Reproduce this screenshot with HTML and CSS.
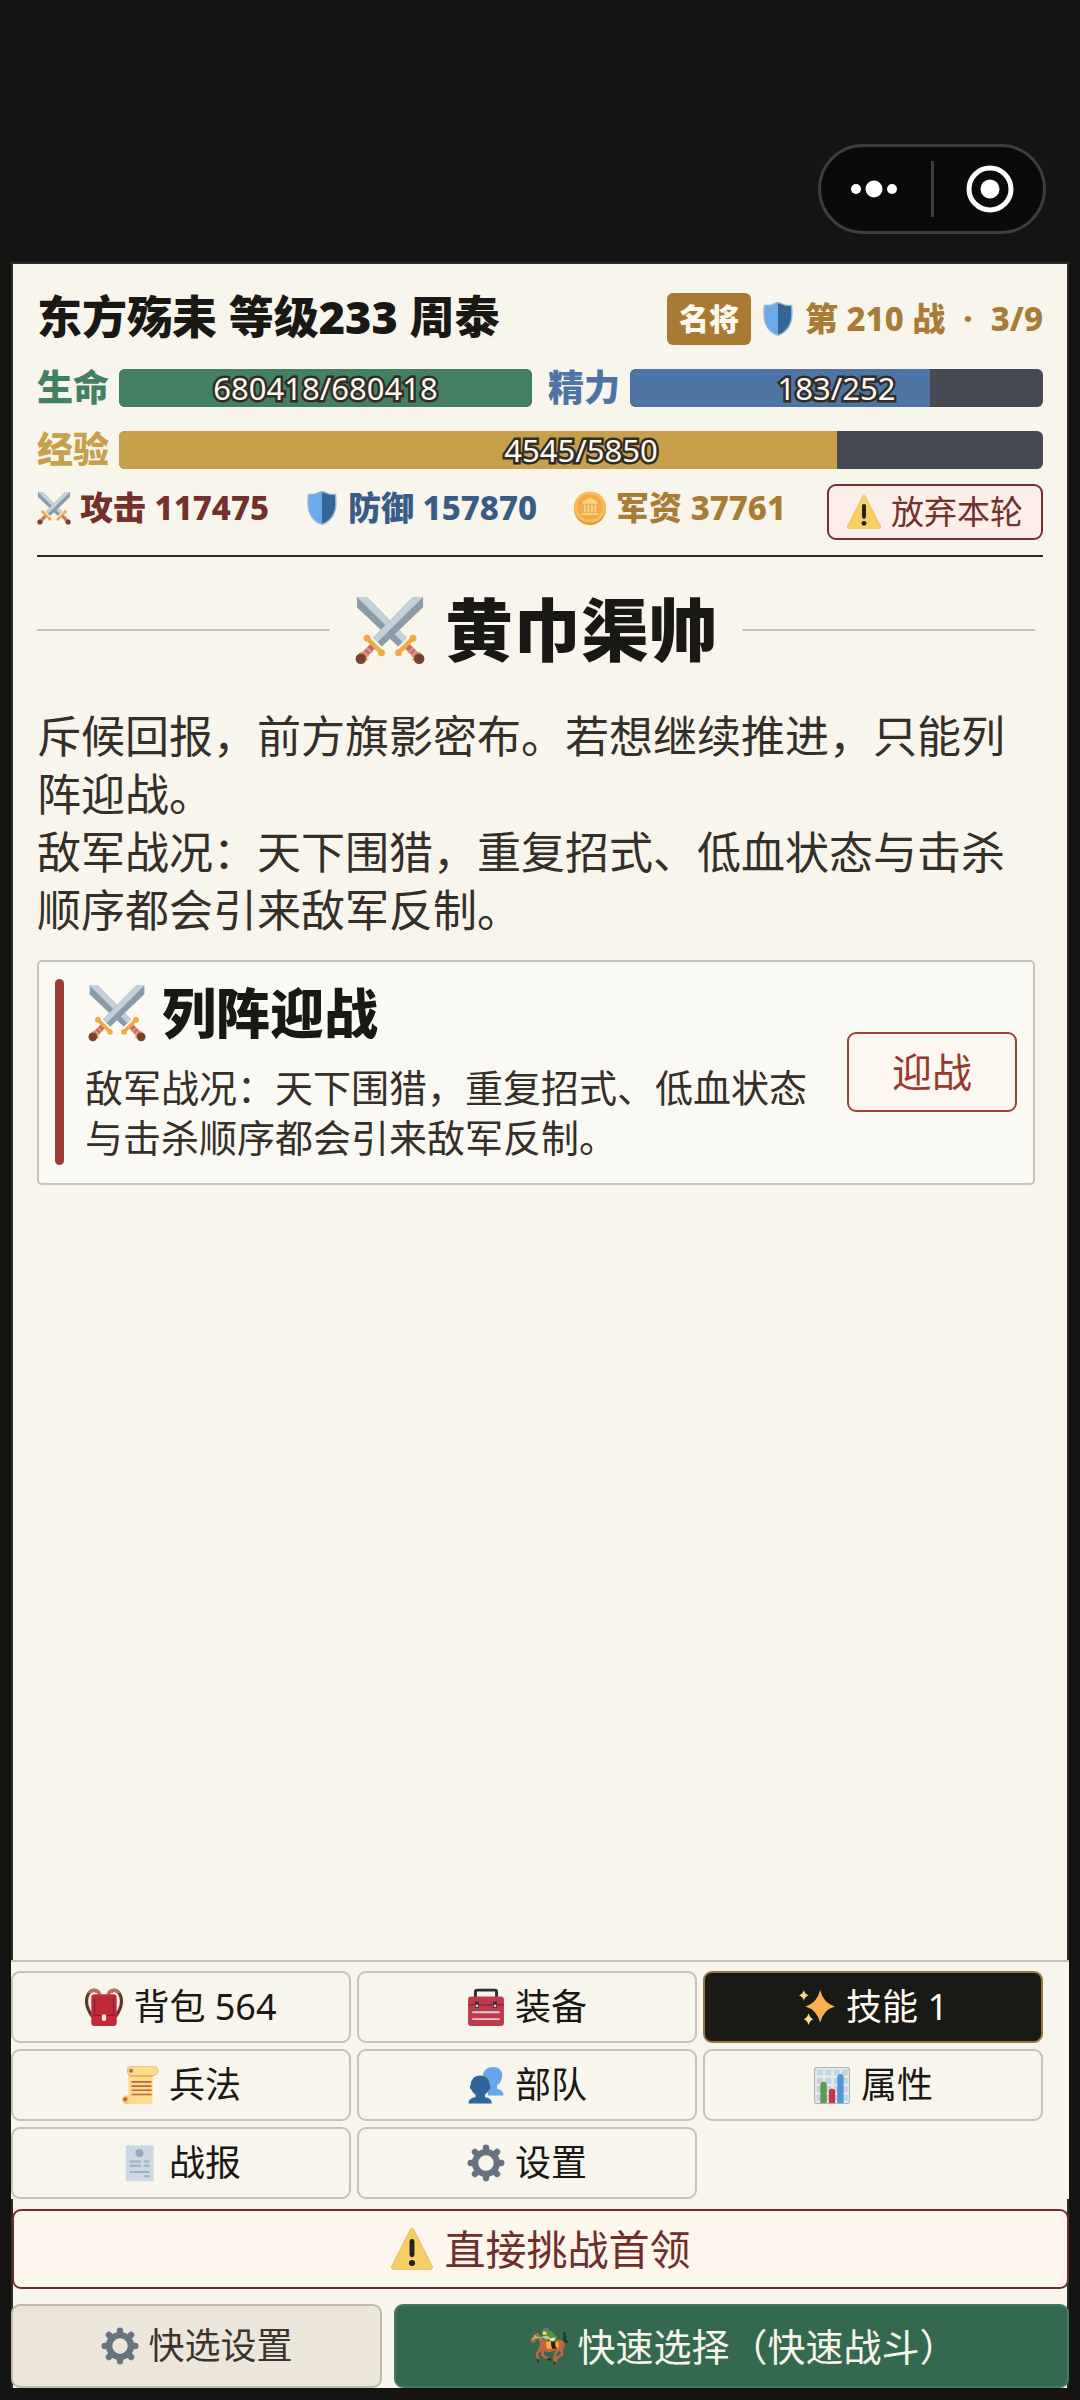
FILE: index.html
```html
<!DOCTYPE html>
<html lang="zh-CN">
<head>
<meta charset="utf-8">
<meta name="viewport" content="width=device-width">
<title>黄巾渠帅</title>
<link rel="stylesheet" href="styles.css">
</head>
<body>
<svg class="sprite" aria-hidden="true">
  <symbol id="i-swords" viewBox="0 0 36 36">
    <path fill="#8b9ba8" d="M1 1h5.200l20.500 21-4.500 4.500L1 6.300z"/>
    <path fill="#c5d1d9" d="M1 1h5.200l20.500 21-2.200 2.300z"/>
    <path fill="#8b9ba8" d="M29.800 1H35v5.300L13.800 26.500 9.300 22z"/>
    <path fill="#c5d1d9" d="M29.800 1H35L11.500 24.300 9.300 22z"/>
    <g stroke-linecap="round" fill="none">
      <path stroke="#c46d66" stroke-width="3.400" d="M8.500 27L4.500 31M27.500 27l4 4"/>
      <path stroke="#e09a88" stroke-width="1" d="M6.500 27.500l2 2M4.700 29.300l2 2M29.500 27.500l-2 2M31.300 29.300l-2 2"/>
      <path stroke="#f0ab42" stroke-width="2.300" d="M6.500 22.500l7 7M29.500 22.500l-7 7"/>
    </g>
    <g fill="#f0ab42"><circle cx="6.200" cy="22.200" r="1.800"/><circle cx="13.600" cy="29.700" r="1.800"/><circle cx="29.800" cy="22.200" r="1.800"/><circle cx="22.400" cy="29.700" r="1.800"/></g>
    <path stroke="#f0ab42" stroke-width="1.400" d="M2.500 29.500l4 4M33.500 29.500l-4 4"/>
    <circle cx="3" cy="32.800" r="2.700" fill="#78412f"/><circle cx="33" cy="32.800" r="2.700" fill="#78412f"/>
  </symbol>
  <symbol id="i-shield" viewBox="0 0 36 36">
    <path fill="#9bb5cb" d="M33 3s-6.500.200-9-1c-3-1.300-4-2-6-2s-3 .700-6 2C9.500 3.200 3 3 3 3s-.500 5-.500 10C2.500 24 8 33 18 36c10-3 15.500-12 15.500-23 0-5-.500-10-.500-10z"/>
    <path fill="#6aaae8" d="M18 1.500c-2 0-3 .700-5.500 1.800C10 4.500 4.300 4.500 4.300 4.500S4 9 4 13c0 10 5 18.500 14 21.400z"/>
    <path fill="#326699" d="M18 1.500c2 0 3 .700 5.500 1.800 2.500 1.200 8.200 1.200 8.200 1.200S32 9 32 13c0 10-5 18.500-14 21.400z"/>
  </symbol>
  <symbol id="i-coin" viewBox="0 0 36 36">
    <ellipse cx="18" cy="18.500" rx="17" ry="17.500" fill="#e79535"/>
    <ellipse cx="18" cy="17" rx="17" ry="16.500" fill="#f6be5e"/>
    <circle cx="18" cy="17" r="13.500" fill="#f2ab46"/>
    <path fill="#fbd48c" d="M18 7l8 4.500v2H10v-2zM11.500 14.500h2v8h-2zM15.300 14.500h2v8h-2zM19 14.500h2v8h-2zM22.700 14.500h2v8h-2zM9.500 23.500h17v2h-17z"/>
  </symbol>
  <symbol id="i-warn" viewBox="0 0 36 36">
    <path fill="#f5cf64" stroke="#d5ad4e" stroke-width=".5" d="M2.700 35.500C.700 35.500-.300 34 .700 32.500L16.200 1.800c1-2 2.600-2 3.600 0l15.500 30.700c1 1.500 0 3-2 3z"/>
    <path stroke="#231f20" stroke-width="4.200" stroke-linecap="round" d="M18 11.500v11.500"/>
    <circle cx="18" cy="30" r="2.600" fill="#231f20"/>
  </symbol>
  <symbol id="i-bag" viewBox="0 0 36 36">
    <path fill="none" stroke="#6a3326" stroke-width="3" d="M7 27C2 20 0 12 3 6c2-4 6-5 10-2M29 27c5-7 7-15 4-21-2-4-6-5-10-2"/>
    <path fill="none" stroke="#bd705c" stroke-width="3.500" d="M4 5c2-4 8-4 10 1M32 5c-2-4-8-4-10 1"/>
    <path fill="#bf2a3a" d="M9 6h18c2 0 3 1 3 3v24c0 2-1 3-3 3H9c-2 0-3-1-3-3V9c0-2 1-3 3-3z"/>
    <path fill="none" stroke="#8f1c2c" stroke-width="1" d="M9 10v16h18V10"/>
    <rect x="16" y="25" width="4" height="6" rx="1" fill="#f5e8de"/>
  </symbol>
  <symbol id="i-toolbox" viewBox="0 0 36 36">
    <path fill="none" stroke="#292f33" stroke-width="2.800" d="M8 9V3.500Q8 2 9.500 2h17Q28 2 28 3.500V9"/>
    <rect x="1" y="8" width="34" height="28" rx="3" fill="#be3b4b"/>
    <path stroke="#982b3b" stroke-width="1.500" d="M1 16h34"/>
    <path stroke="#e9c8cb" stroke-width="1.800" d="M5 23h26M5 29.500h26"/>
    <path stroke="#292f33" stroke-width="3.500" d="M9.500 13v6M26.500 13v6"/>
    <circle cx="9.500" cy="17" r="1.300" fill="#ccd6dd"/><circle cx="26.500" cy="17" r="1.300" fill="#ccd6dd"/>
  </symbol>
  <symbol id="i-spark" viewBox="0 0 36 36">
    <path fill="#f9b14f" d="M21 2q3 12.500 14 15.500-11 3-14 15.500-3-12.500-14-15.500Q18 14.500 21 2z"/>
    <path fill="#fbdc88" d="M5.500 2q1 4 4.500 5-3.500 1-4.500 5-1-4-4.500-5 3.500-1 4.500-5zM10 24q1.200 4.500 4.500 5.500-3.300 1-4.500 5.500-1.200-4.500-4.500-5.500 3.300-1 4.500-5.500z"/>
  </symbol>
  <symbol id="i-scroll" viewBox="0 0 36 36">
    <rect x="1" y="28" width="28" height="8" rx="4" fill="#f4c672"/>
    <path fill="#fcdb8d" d="M7 3h23v30q0 3-3 3H7z"/>
    <rect x="6" y="0" width="29" height="9" rx="4" fill="#fcdb8d" stroke="#e5ad5b" stroke-width=".8"/>
    <path stroke="#e5ad5b" stroke-width="1.500" d="M8 9.500h22"/>
    <path stroke="#bd6642" stroke-width="1.600" d="M10 15h19M10 19h19M10 23h19M10 27h19"/>
    <circle cx="9.500" cy="4.500" r="2" fill="#bd6642"/><circle cx="4" cy="31.500" r="2" fill="#bd6642"/>
  </symbol>
  <symbol id="i-people" viewBox="0 0 36 36">
    <path fill="#66a8e7" d="M24 1c-5 0-9 4-9 9 0 4 2 7 4.500 8.500L20 28h14.500c.500-3-1.500-5.500-6-6.500V18c2.500-1 4-3.500 4.300-6.500C34.500 9 33.500 1 24 1z"/>
    <path fill="#31659a" d="M12.500 9C7 9 3.500 13 3.500 18c-1.500 1.500-.500 4 .800 4.500.700 2 2 3.500 3.700 4.500v2.500c-4.500.500-6.500 2.500-6.500 6h22c0-3.500-2-5.500-6.500-6V27c1.700-1 3-2.500 3.700-4.500 1.500-.500 2-3 .800-4.500 0-5-3.500-9-9-9z"/>
  </symbol>
  <symbol id="i-chart" viewBox="0 0 36 36">
    <rect x="1.500" y="1.500" width="33" height="34" rx="2.500" fill="#e5eaec" stroke="#a7b4bc"/>
    <path stroke="#c4d4de" stroke-width="5.500" stroke-dasharray="6 2" d="M3.500 6H33M3.500 14H33M3.500 22H33M3.500 30H33"/>
    <path fill="#60994b" d="M7 35V18q0-3 3-3t3 3v17z"/><path fill="#c7354b" d="M15 35V24q0-2.500 3-2.500t3 2.500v11z"/><path fill="#4f97d8" d="M23 35V10q0-2.500 3-2.500t3 2.500v25z"/>
  </symbol>
  <symbol id="i-report" viewBox="0 0 36 36">
    <path fill="#cdd9e2" d="M4.500 1H31v34.500H4.500z"/>
    <path stroke="#f8f5ec" stroke-width="1.600" stroke-dasharray="2 2" d="M4.500.800H31M4.500 35.500H31"/>
    <circle cx="17.500" cy="8.500" r="3.800" fill="#96a9ba"/>
    <path stroke="#9fb0c0" stroke-width="1.900" d="M8 16.500h11M21.500 16.500H27M8 20.500h11M21.500 20.500H27M8 26.500h19M21.500 30.500H27"/>
  </symbol>
  <symbol id="i-gear" viewBox="0 0 36 36">
    <path stroke="#67747f" stroke-width="6" stroke-linecap="round" d="M18 3.500v4M18 28.500v4M3.500 18h4M28.500 18h4M7.500 7.500l3 3M25.500 25.500l3 3M7.500 28.500l3-3M25.500 10.500l3-3"/>
    <circle cx="18" cy="18" r="10.300" fill="none" stroke="#67747f" stroke-width="6"/>
  </symbol>
  <symbol id="i-horse" viewBox="0 0 36 36">
    <path fill="none" stroke="#292f33" stroke-width="2.400" stroke-linecap="round" d="M31 14c2-2 3-4 1.500-8M32.500 13l2.500 1"/>
    <g fill="none" stroke="#bd6642" stroke-linejoin="round" stroke-linecap="round">
      <path stroke-width="2.400" d="M11 20l-4.500 5 1 6M13 21l-1.500 5.500 5.500 3.500M29 20l1.500 6-5 3.500-2 5M27 21l-3 4-1 6"/>
      <path stroke-width="4.500" d="M12 18l-2 3M28 18l1 3"/>
    </g>
    <path fill="#bd6642" d="M.500 14l2.500-6 4-2.500 6 7q8 1 16-.500 4 1 4 5-.500 4-4 5.500-5-.500-9 1-6 1-10-2.500-1.500-3-.500-7L7 11l-3 4z"/>
    <path stroke="#292f33" stroke-width="2" stroke-linecap="round" d="M7.500 32.500l-.500-1.500M17 30.500l2 .500M23 35l.500-1"/>
    <path fill="#ffac33" d="M15 14h12v6.500H16z"/>
    <path fill="#231f20" d="M20 13h4v5l2 2.500h-5l-1-3z"/>
    <path fill="#5c913b" d="M14 4.500l6-1 5 5 1 4-5 2-4-4z"/>
    <path fill="#f4ecd8" d="M18 11l6-1-1 3h-4z"/>
    <path fill="#a6d388" d="M11 9l5-1 4 3-5 1z"/>
    <path fill="#ffdc5d" d="M12 4h3.500v3.500H12z"/>
    <path fill="#67747f" d="M11.500 4q1-3.500 4-3.500 3.500.500 3 4z"/>
    <path stroke="#aed06c" stroke-width="1.300" d="M1.500 12l4.500-2 6 .500M4.500 8l2 3"/>
  </symbol>
</svg>

<div class="screen">
  <header class="topbar">
    <div class="capsule">
      <button type="button" class="capsule-btn" aria-label="更多">
        <svg width="46" height="18" viewBox="0 0 46 18" fill="#fff"><circle cx="5" cy="9" r="5"/><circle cx="23" cy="9" r="8.500"/><circle cx="41" cy="9" r="5"/></svg>
      </button>
      <span class="capsule-line"></span>
      <button type="button" class="capsule-btn" aria-label="关闭">
        <svg width="48" height="48" viewBox="0 0 48 48"><circle cx="24" cy="24" r="21" fill="none" stroke="#fff" stroke-width="5"/><circle cx="24" cy="24" r="9.500" fill="#fff"/></svg>
      </button>
    </div>
  </header>

  <main class="panel">
    <section class="status">
      <div class="row title-row">
        <h1 class="player">东方殇耒 等级233 周泰</h1>
        <div class="stage"><span class="badge">名将</span><svg class="icon"><use href="#i-shield"/></svg><span>第 210 战<span class="dot">·</span>3/9</span></div>
      </div>
      <div class="row bars">
        <div class="meter hp"><span class="meter-label">生命</span><div class="track"><div class="fill" style="width:100%"></div><span class="value">680418/680418</span></div></div>
        <div class="meter mp"><span class="meter-label">精力</span><div class="track"><div class="fill" style="width:72.6%"></div><span class="value">183/252</span></div></div>
      </div>
      <div class="row bars">
        <div class="meter xp"><span class="meter-label">经验</span><div class="track"><div class="fill" style="width:77.7%"></div><span class="value">4545/5850</span></div></div>
      </div>
      <div class="row stats">
        <span class="stat atk"><svg class="icon"><use href="#i-swords"/></svg>攻击 117475</span>
        <span class="stat def"><svg class="icon"><use href="#i-shield"/></svg>防御 157870</span>
        <span class="stat gold"><svg class="icon"><use href="#i-coin"/></svg>军资 37761</span>
        <button type="button" class="give-up"><svg class="icon"><use href="#i-warn"/></svg>放弃本轮</button>
      </div>
    </section>

    <section class="content">
      <h2 class="scene"><svg class="icon"><use href="#i-swords"/></svg>黄巾渠帅</h2>
      <div class="story">
        <p>斥候回报，前方旗影密布。若想继续推进，只能列阵迎战。</p>
        <p>敌军战况：天下围猎，重复招式、低血状态与击杀顺序都会引来敌军反制。</p>
      </div>
      <article class="card">
        <span class="card-mark"></span>
        <div class="card-body">
          <h3 class="card-title"><svg class="icon"><use href="#i-swords"/></svg>列阵迎战</h3>
          <p class="card-text">敌军战况：天下围猎，重复招式、低血状态与击杀顺序都会引来敌军反制。</p>
        </div>
        <button type="button" class="fight">迎战</button>
      </article>
    </section>

    <nav class="menu">
      <button type="button" class="menu-btn"><svg class="icon"><use href="#i-bag"/></svg>背包 564</button>
      <button type="button" class="menu-btn"><svg class="icon"><use href="#i-toolbox"/></svg>装备</button>
      <button type="button" class="menu-btn active"><svg class="icon"><use href="#i-spark"/></svg>技能 1</button>
      <button type="button" class="menu-btn"><svg class="icon"><use href="#i-scroll"/></svg>兵法</button>
      <button type="button" class="menu-btn"><svg class="icon"><use href="#i-people"/></svg>部队</button>
      <button type="button" class="menu-btn"><svg class="icon"><use href="#i-chart"/></svg>属性</button>
      <button type="button" class="menu-btn"><svg class="icon"><use href="#i-report"/></svg>战报</button>
      <button type="button" class="menu-btn"><svg class="icon"><use href="#i-gear"/></svg>设置</button>
    </nav>
    <button type="button" class="boss"><svg class="icon"><use href="#i-warn"/></svg>直接挑战首领</button>
    <div class="quick">
      <button type="button" class="quick-set"><svg class="icon"><use href="#i-gear"/></svg>快选设置</button>
      <button type="button" class="quick-go"><svg class="icon"><use href="#i-horse"/></svg>快速选择（快速战斗）</button>
    </div>
  </main>
</div>
</body>
</html>
```
FILE: styles.css
```css
* { box-sizing: border-box; }

body {
  margin: 0;
  background: #141412;
  color: #191814;
  font-family: "Noto Sans", "Noto Sans CJK SC", sans-serif;
}

h1, h2, h3, p { margin: 0; }
button { font-family: inherit; cursor: pointer; padding: 0; }
.sprite { display: none; }

.icon {
  width: 34px;
  height: 34px;
  flex: none;
}

.screen {
  min-height: 100vh;
  display: flex;
  flex-direction: column;
  padding: 0 11px 12px;
}

/* top bar */
.topbar {
  display: flex;
  justify-content: flex-end;
  padding: 144px 23px 28px;
}

.capsule {
  display: flex;
  align-items: center;
  width: 228px;
  height: 90px;
  border: 3px solid #3e3e3d;
  border-radius: 45px;
  background: #0a0a08;
}

.capsule-btn {
  flex: 1;
  display: flex;
  align-items: center;
  justify-content: center;
  height: 84px;
  border: 0;
  background: none;
}

.capsule-btn:first-child { padding-right: 4px; }
.capsule-btn:last-child { padding-left: 4px; }
.capsule-line { width: 3px; height: 56px; background: #3e3e3d; }

/* panel */
.panel {
  flex: 1;
  display: flex;
  flex-direction: column;
  border: 2px solid #2c2b27;
  border-bottom: 0;
  background: #f8f5ec;
}

.status {
  margin: 0 24px;
  padding: 29px 0 15px;
  border-bottom: 2px solid #2c2b24;
}

.row { display: flex; align-items: center; }
.title-row { justify-content: space-between; height: 52px; }
.player { font-size: 45px; line-height: 52px; font-weight: 900; padding-bottom: 4px; }

.stage {
  display: flex;
  align-items: center;
  gap: 10px;
  color: #a87c34;
  font-size: 33px;
  line-height: 52px;
  font-weight: 800;
}

.dot { margin: 0 18px; }

.badge {
  padding: 0 12px;
  border-radius: 6px;
  background: #a87a33;
  color: #fffaf0;
  font-size: 30px;
}

.bars { gap: 16px; margin-top: 24px; }
.meter { flex: 1; display: flex; align-items: center; gap: 10px; }
.meter-label { font-size: 36px; line-height: 38px; font-weight: 800; }

.track {
  flex: 1;
  position: relative;
  height: 38px;
  border-radius: 6px;
  background: #474a54;
}

.fill { height: 100%; border-radius: 6px 0 0 6px; background: currentColor; }
.hp .fill { border-radius: 6px; }

.value {
  position: absolute;
  inset: 0;
  color: #fffaf2;
  font-size: 31px;
  line-height: 38px;
  text-align: center;
  -webkit-text-stroke: 5px #302d26;
  paint-order: stroke fill;
}

.hp { color: #447f62; }
.mp { color: #4d74a4; }
.xp { color: #c8a04b; }

.stats {
  gap: 36px;
  align-items: flex-start;
  margin-top: 15px;
  font-size: 33px;
  line-height: 48px;
  font-weight: 800;
  white-space: nowrap;
}

.stat { display: flex; align-items: center; gap: 9px; }
.atk { color: #74302a; }
.def { color: #385c88; }
.gold { color: #a87c34; }

.give-up {
  display: flex;
  align-items: center;
  justify-content: center;
  gap: 10px;
  width: 216px;
  height: 56px;
  margin-left: auto;
  border: 2px solid #74302a;
  border-radius: 9px;
  background: #fcefea;
  color: #74302a;
  font-size: 33px;
  line-height: 52px;
}

/* story */
.content { padding: 33px 32px 0 24px; }

.scene {
  display: flex;
  align-items: center;
  font-size: 68px;
  line-height: 80px;
  font-weight: 900;
}

.scene::before, .scene::after {
  content: "";
  flex: 1;
  height: 2px;
  background: #c6c3b9;
}

.scene::before { margin-right: 25px; }
.scene::after { margin-left: 25px; }
.scene .icon { width: 70px; height: 70px; margin-right: 20px; }

.story {
  margin-top: 37px;
  color: #342f29;
  font-size: 44px;
  line-height: 58px;
}

.card {
  display: flex;
  align-items: center;
  margin-top: 21px;
  padding: 17px 16px 18px;
  border: 2px solid #c6c4b8;
  border-radius: 5px;
  background: #fbf9f3;
}

.card-mark {
  align-self: stretch;
  width: 9px;
  margin-right: 21px;
  border-radius: 5px;
  background: #9c3d32;
}

.card-body { flex: 1; padding-bottom: 3px; }

.card-title {
  display: flex;
  align-items: center;
  gap: 16px;
  padding-left: 3px;
  font-size: 54px;
  line-height: 68px;
  font-weight: 900;
}

.card-title .icon { width: 58px; height: 58px; }

.card-text {
  margin-top: 15px;
  color: #342f29;
  font-size: 38px;
  line-height: 50px;
}

.fight {
  flex: none;
  width: 170px;
  height: 80px;
  margin-left: 24px;
  border: 2px solid #9c4437;
  border-radius: 9px;
  background: #fcf8f1;
  color: #963a2e;
  font-size: 40px;
  line-height: 74px;
}

/* bottom menu */
.menu {
  display: grid;
  grid-template-columns: repeat(3, 1fr);
  gap: 6px;
  margin: auto -2px 0;
  padding: 9px 26px 0 0;
  border-top: 2px solid #c6c2b7;
  background: #f8f5ec;
}

.menu .icon, .quick .icon { width: 38px; height: 38px; }

.menu-btn {
  display: flex;
  align-items: center;
  justify-content: center;
  gap: 10px;
  height: 72px;
  border: 2px solid #c6c2b7;
  border-radius: 9px;
  background: #f8f5ec;
  color: #191814;
  font-size: 36px;
  line-height: 68px;
}

.menu-btn.active { border-color: #967542; background: #191916; color: #fffaf2; }

.boss {
  display: flex;
  align-items: center;
  justify-content: center;
  gap: 12px;
  height: 80px;
  margin: 10px -2px 15px -1px;
  border: 2px solid #6e2f2b;
  border-radius: 9px;
  background: #fdf6ed;
  color: #6e2f2b;
  font-size: 41px;
  line-height: 76px;
}

.boss .icon { width: 42px; height: 42px; }

.quick {
  display: grid;
  grid-template-columns: 11fr 20fr;
  gap: 12px;
  margin: 0 -2px;
}

.quick button {
  display: flex;
  align-items: center;
  justify-content: center;
  gap: 10px;
  height: 84px;
  border: 2px solid #bfb9ae;
  border-radius: 9px;
  background: #ebe5da;
  color: #3c342a;
  font-size: 36px;
  line-height: 80px;
}

.quick .quick-go {
  padding-left: 24px;
  border-color: #457a60;
  background: #35694f;
  color: #f8f5ec;
  font-size: 38px;
}
```
